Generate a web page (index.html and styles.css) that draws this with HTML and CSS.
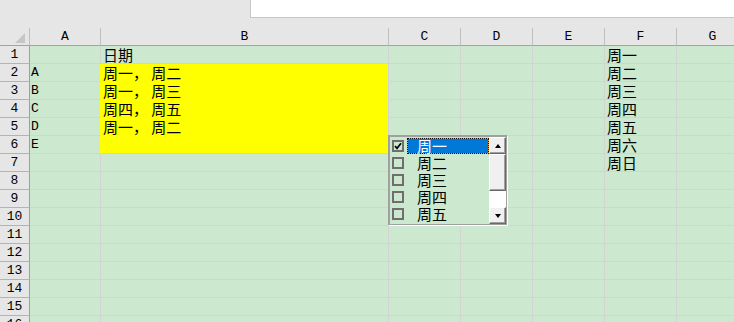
FILE: index.html
```html
<!DOCTYPE html>
<html lang="zh-CN">
<head>
  <meta charset="UTF-8" />
  <title>Sheet</title>
  <link rel="stylesheet" href="styles.css">
</head>
<body>

<div class="topbar">
  <div class="namebox"></div>
</div>

<div class="sheet">
  <div class="corner"><span class="tri"></span></div>
  <div class="colhead">A</div>
  <div class="colhead">B</div>
  <div class="colhead">C</div>
  <div class="colhead">D</div>
  <div class="colhead">E</div>
  <div class="colhead">F</div>
  <div class="colhead">G</div>

  <div class="rowhead">1</div>
  <div class="cell"></div><div class="cell">日期</div><div class="cell"></div><div class="cell"></div><div class="cell"></div><div class="cell">周一</div><div class="cell"></div>

  <div class="rowhead">2</div>
  <div class="cell latin fill-next">A</div><div class="cell fill">周一， 周二</div><div class="cell"></div><div class="cell"></div><div class="cell"></div><div class="cell">周二</div><div class="cell"></div>

  <div class="rowhead">3</div>
  <div class="cell latin fill-next">B</div><div class="cell fill">周一， 周三</div><div class="cell"></div><div class="cell"></div><div class="cell"></div><div class="cell">周三</div><div class="cell"></div>

  <div class="rowhead">4</div>
  <div class="cell latin fill-next">C</div><div class="cell fill">周四， 周五</div><div class="cell"></div><div class="cell"></div><div class="cell"></div><div class="cell">周四</div><div class="cell"></div>

  <div class="rowhead">5</div>
  <div class="cell latin fill-next">D</div><div class="cell fill">周一， 周二</div><div class="cell"></div><div class="cell"></div><div class="cell"></div><div class="cell">周五</div><div class="cell"></div>

  <div class="rowhead">6</div>
  <div class="cell latin fill-next">E</div><div class="cell fill last"></div><div class="cell"></div><div class="cell"></div><div class="cell"></div><div class="cell">周六</div><div class="cell"></div>

  <div class="rowhead">7</div>
  <div class="cell"></div><div class="cell"></div><div class="cell"></div><div class="cell"></div><div class="cell"></div><div class="cell">周日</div><div class="cell"></div>

  <div class="rowhead">8</div>
  <div class="cell"></div><div class="cell"></div><div class="cell"></div><div class="cell"></div><div class="cell"></div><div class="cell"></div><div class="cell"></div>
  <div class="rowhead">9</div>
  <div class="cell"></div><div class="cell"></div><div class="cell"></div><div class="cell"></div><div class="cell"></div><div class="cell"></div><div class="cell"></div>
  <div class="rowhead">10</div>
  <div class="cell"></div><div class="cell"></div><div class="cell"></div><div class="cell"></div><div class="cell"></div><div class="cell"></div><div class="cell"></div>
  <div class="rowhead">11</div>
  <div class="cell"></div><div class="cell"></div><div class="cell"></div><div class="cell"></div><div class="cell"></div><div class="cell"></div><div class="cell"></div>
  <div class="rowhead">12</div>
  <div class="cell"></div><div class="cell"></div><div class="cell"></div><div class="cell"></div><div class="cell"></div><div class="cell"></div><div class="cell"></div>
  <div class="rowhead">13</div>
  <div class="cell"></div><div class="cell"></div><div class="cell"></div><div class="cell"></div><div class="cell"></div><div class="cell"></div><div class="cell"></div>
  <div class="rowhead">14</div>
  <div class="cell"></div><div class="cell"></div><div class="cell"></div><div class="cell"></div><div class="cell"></div><div class="cell"></div><div class="cell"></div>
  <div class="rowhead">15</div>
  <div class="cell"></div><div class="cell"></div><div class="cell"></div><div class="cell"></div><div class="cell"></div><div class="cell"></div><div class="cell"></div>
  <div class="rowhead">16</div>
  <div class="cell"></div><div class="cell"></div><div class="cell"></div><div class="cell"></div><div class="cell"></div><div class="cell"></div><div class="cell"></div>
</div>

<!-- list box control floating over C6 -->
<div class="listbox">
  <ul class="opts">
    <li class="opt sel">
      <span class="chk"><svg viewBox="0 0 8 8" width="8" height="8"><polyline points="1,4 3,6.3 7,1.2" fill="none" stroke="#000" stroke-width="1.7"/></svg></span>
      <span class="lbl">周一</span>
    </li>
    <li class="opt"><span class="chk"></span><span class="lbl">周二</span></li>
    <li class="opt"><span class="chk"></span><span class="lbl">周三</span></li>
    <li class="opt"><span class="chk"></span><span class="lbl">周四</span></li>
    <li class="opt"><span class="chk"></span><span class="lbl">周五</span></li>
    <li class="opt"><span class="chk"></span><span class="lbl">周六</span></li>
  </ul>
  <div class="sbar">
    <div class="sbtn"><span class="arrow up"></span></div>
    <div class="thumb"></div>
    <div class="track"></div>
    <div class="sbtn"><span class="arrow down"></span></div>
  </div>
</div>

</body>
</html>
```

FILE: styles.css
```css
:root {
  --chrome: #e6e6e6;
  --green: #cce8cf;
  --grid: #d4d4d4;
  --head-line: #bfbfbf;
  --yellow: #ffff00;
}

* { margin: 0; padding: 0; box-sizing: border-box; }

html, body {
  height: 100%;
  overflow: hidden;
  background: var(--chrome);
  font-family: "Noto Sans CJK SC", sans-serif;
  color: #000;
}

.topbar {
  height: 28px;
}

.namebox {
  margin-left: 250px;
  height: 18px;
  background: #fff;
  border-left: 1px solid #c6c6c6;
  border-bottom: 1px solid #c6c6c6;
}

.sheet {
  display: grid;
  grid-template-columns: 30px 71px 288px repeat(5, 72px);
  grid-auto-rows: 18px;
  width: 749px;
}

/* header row */
.corner, .colhead {
  background: var(--chrome);
  border-right: 1px solid var(--head-line);
  border-bottom: 1px solid #a3a3a3;
}

.corner {
  display: flex;
  justify-content: flex-end;
  align-items: flex-end;
  padding: 0 4px 2px 0;
}

.tri {
  width: 0;
  height: 0;
  border-left: 10px solid transparent;
  border-bottom: 10px solid #c6c6c6;
}

.colhead {
  font-family: "Liberation Mono", monospace;
  font-size: 13px;
  line-height: 18px;
  text-align: center;
}

.rowhead {
  background: var(--chrome);
  border-right: 1px solid #9e9e9e;
  border-bottom: 1px solid #b3b3b3;
  font-family: "Liberation Mono", monospace;
  font-size: 13px;
  line-height: 18px;
  text-align: center;
}

.cell {
  background: var(--green);
  border-right: 1px solid var(--grid);
  border-bottom: 1px solid var(--grid);
  padding-left: 2px;
  font-size: 15px;
  line-height: 17px;
  white-space: nowrap;
}

.cell.latin {
  font-family: "Liberation Mono", monospace;
  font-size: 13px;
  line-height: 18px;
  padding-left: 1px;
}

.cell.fill-next { border-right-color: var(--yellow); }

.cell.fill {
  background: var(--yellow);
  border-bottom-color: var(--yellow);
}

.cell.fill.last { border-bottom-color: var(--grid); }

/* list box */
.listbox {
  position: absolute;
  left: 388px;
  top: 135px;
  width: 119px;
  height: 90px;
  display: flex;
  background: var(--green);
  border-top: 2px solid #a0a0a0;
  border-left: 2px solid #a0a0a0;
  border-right: 1px solid #a0a0a0;
  border-bottom: 1px solid #a0a0a0;
  box-shadow: 1px 1px 0 #fff;
  overflow: hidden;
}

.opts {
  list-style: none;
  width: 99px;
  overflow: hidden;
}

.opt {
  height: 17px;
  display: flex;
  align-items: center;
  padding-left: 2px;
}

.chk {
  width: 12px;
  height: 12px;
  border: 2px solid #6e6e6e;
  display: flex;
  align-items: center;
  justify-content: center;
  flex-shrink: 0;
}

.lbl {
  flex: 1;
  height: 16px;
  margin-left: 3px;
  padding-left: 9px;
  font-size: 15px;
  line-height: 14px;
  border: 1px solid transparent;
}

.opt.sel .lbl {
  color: #fff;
  border: 1px dotted #111;
  background: linear-gradient(#0078d7, #0078d7) padding-box, #f0a040 border-box;
}

.sbar {
  width: 17px;
  display: flex;
  flex-direction: column;
}

.sbtn, .thumb {
  background: #f0f0f0;
  border: 1px solid;
  border-color: #fff #696969 #696969 #fff;
  box-shadow: inset -1px -1px 0 #a0a0a0;
}

.sbtn {
  height: 17px;
  display: flex;
  align-items: center;
  justify-content: center;
}

.thumb { height: 37px; }

.track {
  flex: 1;
  background: #fff;
}

.arrow {
  width: 0;
  height: 0;
  border-left: 3.5px solid transparent;
  border-right: 3.5px solid transparent;
}

.arrow.up { border-bottom: 4px solid #000; }
.arrow.down { border-top: 4px solid #000; }
```
